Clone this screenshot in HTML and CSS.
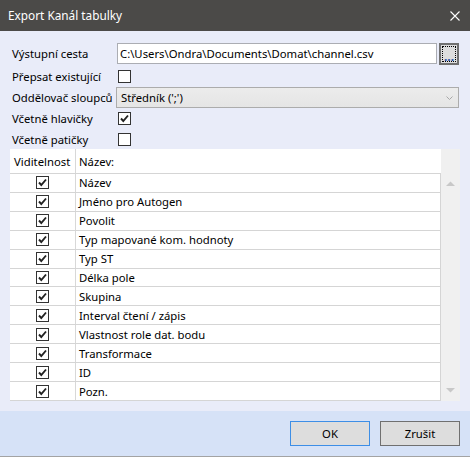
FILE: index.html
```html
<!DOCTYPE html>
<html>
<head>
<meta charset="utf-8">
<link rel="stylesheet" href="styles.css">
</head>
<body>
<div class="window">
  <div class="titlebar">
    <span class="title">Export Kanál tabulky</span>
    <svg class="close" width="10" height="10" viewBox="0 0 10 10"><path d="M0.5 0.5 L9.5 9.5 M9.5 0.5 L0.5 9.5" stroke="#fff" stroke-width="1.1" fill="none"/></svg>
  </div>
  <div class="content">
    <div class="form">
      <div class="row row-path">
        <div class="label">Výstupní cesta</div>
        <div class="textbox">C:\Users\Ondra\Documents\Domat\channel.csv</div>
        <div class="browse"><span class="focus"></span><span class="dots">...</span></div>
      </div>
      <div class="row row-check">
        <div class="label">Přepsat existující</div>
        <span class="check"></span>
      </div>
      <div class="row row-combo">
        <div class="label">Oddělovač sloupců</div>
        <div class="combo"><span>Středník (';')</span>
          <svg class="chev" width="7" height="4" viewBox="0 0 7 4"><path d="M0.5 0.5 L3.5 3.5 L6.5 0.5" stroke="#a8a8a8" fill="none"/></svg>
        </div>
      </div>
      <div class="row row-check2">
        <div class="label">Včetně hlavičky</div>
        <span class="check on"><svg width="11" height="11" viewBox="0 0 11 11"><path d="M2 5.5 L4.3 8 L9 2.5" stroke="#222" stroke-width="1.9" fill="none"/></svg></span>
      </div>
      <div class="row row-check3">
        <div class="label">Včetně patičky</div>
        <span class="check"></span>
      </div>
    </div>
    <div class="grid">
      <div class="table">
        <div class="trow head"><div class="c1">Viditelnost</div><div class="c2">Název:</div></div>
        <div class="trow"><div class="c1"><span class="check on"><svg width="11" height="11" viewBox="0 0 11 11"><path d="M2 5.5 L4.3 8 L9 2.5" stroke="#222" stroke-width="1.9" fill="none"/></svg></span></div><div class="c2">Název</div></div>
        <div class="trow"><div class="c1"><span class="check on"><svg width="11" height="11" viewBox="0 0 11 11"><path d="M2 5.5 L4.3 8 L9 2.5" stroke="#222" stroke-width="1.9" fill="none"/></svg></span></div><div class="c2">Jméno pro Autogen</div></div>
        <div class="trow"><div class="c1"><span class="check on"><svg width="11" height="11" viewBox="0 0 11 11"><path d="M2 5.5 L4.3 8 L9 2.5" stroke="#222" stroke-width="1.9" fill="none"/></svg></span></div><div class="c2">Povolit</div></div>
        <div class="trow"><div class="c1"><span class="check on"><svg width="11" height="11" viewBox="0 0 11 11"><path d="M2 5.5 L4.3 8 L9 2.5" stroke="#222" stroke-width="1.9" fill="none"/></svg></span></div><div class="c2">Typ mapované kom. hodnoty</div></div>
        <div class="trow"><div class="c1"><span class="check on"><svg width="11" height="11" viewBox="0 0 11 11"><path d="M2 5.5 L4.3 8 L9 2.5" stroke="#222" stroke-width="1.9" fill="none"/></svg></span></div><div class="c2">Typ ST</div></div>
        <div class="trow"><div class="c1"><span class="check on"><svg width="11" height="11" viewBox="0 0 11 11"><path d="M2 5.5 L4.3 8 L9 2.5" stroke="#222" stroke-width="1.9" fill="none"/></svg></span></div><div class="c2">Délka pole</div></div>
        <div class="trow"><div class="c1"><span class="check on"><svg width="11" height="11" viewBox="0 0 11 11"><path d="M2 5.5 L4.3 8 L9 2.5" stroke="#222" stroke-width="1.9" fill="none"/></svg></span></div><div class="c2">Skupina</div></div>
        <div class="trow"><div class="c1"><span class="check on"><svg width="11" height="11" viewBox="0 0 11 11"><path d="M2 5.5 L4.3 8 L9 2.5" stroke="#222" stroke-width="1.9" fill="none"/></svg></span></div><div class="c2">Interval čtení / zápis</div></div>
        <div class="trow"><div class="c1"><span class="check on"><svg width="11" height="11" viewBox="0 0 11 11"><path d="M2 5.5 L4.3 8 L9 2.5" stroke="#222" stroke-width="1.9" fill="none"/></svg></span></div><div class="c2">Vlastnost role dat. bodu</div></div>
        <div class="trow"><div class="c1"><span class="check on"><svg width="11" height="11" viewBox="0 0 11 11"><path d="M2 5.5 L4.3 8 L9 2.5" stroke="#222" stroke-width="1.9" fill="none"/></svg></span></div><div class="c2">Transformace</div></div>
        <div class="trow"><div class="c1"><span class="check on"><svg width="11" height="11" viewBox="0 0 11 11"><path d="M2 5.5 L4.3 8 L9 2.5" stroke="#222" stroke-width="1.9" fill="none"/></svg></span></div><div class="c2">ID</div></div>
        <div class="trow"><div class="c1"><span class="check on"><svg width="11" height="11" viewBox="0 0 11 11"><path d="M2 5.5 L4.3 8 L9 2.5" stroke="#222" stroke-width="1.9" fill="none"/></svg></span></div><div class="c2">Pozn.</div></div>
      </div>
      <div class="scrollbar">
        <svg class="arrow-up" width="9" height="5" viewBox="0 0 9 5"><path d="M0 5 L4.5 0.5 L9 5 Z" fill="#c8c8c8"/></svg>
        <svg class="arrow-down" width="9" height="5" viewBox="0 0 9 5"><path d="M0 0 L4.5 4.5 L9 0 Z" fill="#c8c8c8"/></svg>
      </div>
    </div>
  </div>
  <div class="footer">
    <div class="btn btn-ok">OK</div>
    <div class="btn">Zrušit</div>
  </div>
</div>
</body>
</html>
```
FILE: styles.css
```css
* { box-sizing: border-box; }
html, body { margin: 0; padding: 0; }
body {
  font-family: "Segoe UI", "Noto Sans", sans-serif;
  font-size: 11.3px;
  color: #000;
  width: 470px;
  height: 457px;
  overflow: hidden;
}
.window {
  width: 470px;
  height: 457px;
  display: flex;
  flex-direction: column;
  background: #e9ecf9;
}
.titlebar {
  height: 31px;
  flex: none;
  background: #4b4a48;
  color: #fff;
  display: flex;
  align-items: center;
  justify-content: space-between;
  padding: 0 10px 0 8px;
  font-size: 11.8px;
}
.title { margin-top: -1px; }
.close { display: block; }
.content {
  flex: 1;
  padding: 12px 10px 0 10px;
  display: flex;
  flex-direction: column;
}
.form { display: flex; flex-direction: column; }
.row { display: flex; align-items: center; }
.label { width: 106px; flex: none; padding-left: 2px; white-space: nowrap; }
.row-path { height: 22px; align-items: flex-start; }
.row-path .label { line-height: 21px; }
.row-check { height: 22px; }
.row-combo { height: 21px; }
.row-check2 { height: 21px; }
.row-check3 { height: 20px; align-items: flex-start; }
.row-check3 .label { line-height: 21px; }
.row-check3 .check { margin-top: 4px; }
.row .check { margin-left: 2px; }
.textbox {
  margin-left: 1px;
  width: 320px;
  height: 21px;
  border: 1px solid #abadb3;
  background: #fff;
  padding: 0 2px;
  line-height: 19px;
  white-space: nowrap;
  overflow: hidden;
}
.browse {
  margin-left: 2px;
  width: 20px;
  height: 22px;
  border: 2px solid #707070;
  background: #dddddd;
  position: relative;
}
.browse .focus {
  position: absolute;
  left: 1px; top: 1px; right: 1px; bottom: 1px;
  border: 1px dotted #000;
}
.browse .dots {
  position: absolute;
  left: 0; right: 0; top: 8px;
  text-align: center;
  font-size: 12px;
  line-height: 8px;
  color: #2a4fa0;
  font-weight: bold;
  z-index: 1;
}
.combo {
  width: 343px;
  height: 21px;
  border: 1px solid #acacac;
  background: linear-gradient(#ececec, #e5e5e5);
  display: flex;
  align-items: center;
  justify-content: space-between;
  padding: 0 5px 0 4px;
}
.chev { display: block; }
.check {
  display: inline-flex;
  align-items: center;
  justify-content: center;
  width: 13px;
  height: 13px;
  border: 1px solid #333;
  background: #fff;
  flex: none;
}
.check svg { display: block; }
.grid {
  height: 252px;
  display: flex;
  background: #fff;
}
.table { width: 431px; display: flex; flex-direction: column; }
.trow {
  display: flex;
  height: 19px;
  border-bottom: 1px solid #d5d5d5;
  border-right: 1px solid #d5d5d5;
}
.trow.head {
  height: 25px;
  border-right: none;
}
.c1 {
  width: 66px;
  flex: none;
  border-right: 1px solid #d8d8d8;
  display: flex;
  align-items: center;
  justify-content: center;
}
.head .c1 { justify-content: flex-start; padding-left: 4px; padding-top: 1px; }
.c2 { padding-left: 3px; display: flex; align-items: center; white-space: nowrap; }
.head .c2 { padding-top: 1px; }
.c1 .check { margin-left: -1px; }
.scrollbar {
  width: 19px;
  background: #f0f0f0;
  position: relative;
}
.arrow-up { position: absolute; left: 5px; top: 32px; }
.arrow-down { position: absolute; left: 5px; bottom: 8px; }
.footer {
  height: 46px;
  flex: none;
  background: #d6e2f7;
  border-bottom: 1px solid #a3a3a3;
  display: flex;
  justify-content: flex-end;
  align-items: flex-start;
  padding: 10px 10px 0 0;
  gap: 10px;
}
.btn {
  width: 80px;
  height: 25px;
  border: 1px solid #707070;
  background: #dddddd;
  display: flex;
  align-items: center;
  justify-content: center;
}
.btn-ok { border-color: #3d8ee6; }
```
